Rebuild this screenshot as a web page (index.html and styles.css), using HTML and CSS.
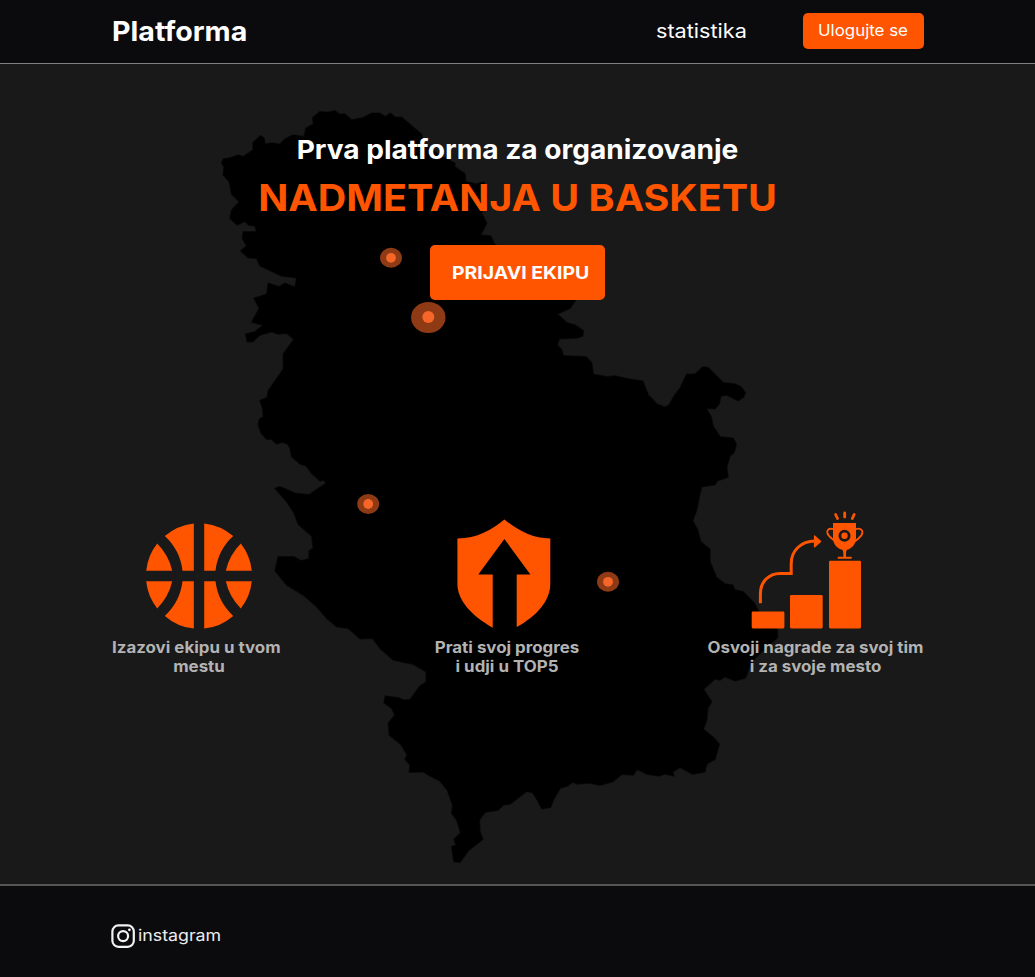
FILE: index.html
```
<!DOCTYPE html>
<html lang="sr">
<head>
<meta charset="utf-8">
<title>Platforma</title>
<link rel="stylesheet" href="styles.css">
</head>
<body>
<header class="header">
  <a class="brand">Platforma</a>
  <nav class="nav">
    <a class="nav-link">statistika</a>
    <button class="login"><span class="login-text">Ulogujte se</span></button>
  </nav>
</header>

<main class="hero">
  <svg class="map" viewBox="0 64 1035 820" aria-hidden="true">
    <path class="land" d="M221.7 163.3L223.3 159L230 158L238.3 155L243.3 156.7L253 150V142.7L260.7 135.7L264 138.3L265 144L272 143L280 144.3L285 139L293.3 135L304 136.7L306 128.3L313.3 124.3L312.7 117.7L320 111.7L328.3 112.3L335 110.7L339.3 114.3L345 114L351.7 120L363.3 117.7L371.7 113.3H380L385 116.7L390.7 113.3L395 117.3H401.7L413.3 127.3L421.7 134.3L423 141.7L432 150L445 158.3L455 163.3V167L465 174L465.7 181.7L476.7 184L484 182L486 195L481.7 213.3L486.7 223.3L480.7 235L490.7 236L494 243.3L520 270L575.7 300L570 308.3L557.3 314L566.7 322.7L575 325L583.3 330.7L582.7 336L576.7 338L559.3 338.7L557.3 345L561.7 350L563.3 355.7L586 356.7L591.7 362.7L593.3 374.3L606.7 376.7L615 376L630 379.3L642.7 381L648.3 395L653.3 400L656.7 404L665 407.3L669.3 405L673.3 397.3L680 388.3L686.7 374.3L695 374L703.3 366.7L708.3 367.7L723.3 382.7L735 384L741 387L745.5 393L743.3 397.3L738.3 400.7L726.7 395L721 396L719 404L715 408.7L706 408.3L711 416.7L713.3 426.7L720 436.7L733.3 438.3L736.3 444.3L734 452.7L730 456L726.7 466.7L728 477.3L717.3 480.7L715 484.7L701.7 486.7L699.3 496.7L696.7 510L692.7 520.7L697.7 530L700.7 541.7L710 549.3V561.7L716.7 577.7L725 584L732.7 585L735 590L743.3 591.7L754 602.7L760 614L774 624L777.3 630L777.7 637.3L771.7 642.7L756 657L750 665L746.7 675L745 678.3L735 680.7L725 676.7L720 680L715 679L703.3 689.3L711.7 701.7L707.7 708.3L706.7 720L703.3 729.3L713.3 737.3L719.3 744.3L715 759.3L706.7 764L705 771.7L692.7 774.3L680 767.3L672.7 771.7L674 776L665 774L659.3 776L647.3 774.3L636.7 769L633.3 775L621.7 774.3L612.7 781.7L600 785.3L588.3 783L577.3 784L572.7 782L567.3 786L560 788.3L553.3 800L550.7 807.3L541.7 808.7L538.3 801.7L532.7 792.7L526.7 791.3L510 804L503.3 805L498.3 810L485 812.3L479.3 820L480 831.7L482.7 839.3L468.3 850.7L460 862.3L454 861.7L451.7 846.7L456 845L454 839.3L460.7 832.7L456.7 820L451.7 813.3L452.7 805L447.3 790L440 781L428.3 775L423.3 771.7L409.3 772.3L410 765L405 759.3L407.3 755L400.7 744L389.3 735L388.3 723.3L395 715L391.7 708.3L384 702.7L385.3 696L398.3 697.7L403.3 700L410 699.7L420 686L426 682.3L426.3 671.7L413.3 664.3L393.3 660L380 648.3L372.7 638.3L360 638.7L348.3 628.3L336.7 626.7L326.7 618.3L316.7 606.7L303.3 595L286.7 585L275 570.7L278.3 556.7H294L301 560.7L309 558.7L309.3 550.7L313.3 548.3L311.7 536L298.3 524.3L294 512.7L286.7 501.7L275 488.3L280 486.7L295 493.3L309.3 494.7L326 483.3L324 480L320 481L311.7 473.3L306 465.7L300 464L291.7 456.7L290 448L287.7 444L282 442L276.7 444L271.7 439.3H266.7L261.3 433.3L258.3 425L259.3 419.3L263.3 416.7L262.7 408.3L260 400.7L267.3 397.3L268.3 390.7L283.3 369.3V354L294 339.3L286.7 333.3L278 334L271.7 331.7L260 335L252.7 341.7H247.3L245.7 334L255 331.7L263.3 325L251.7 322.3L259.3 308.3L254 298.3L266.7 294.3L268.3 283.3L279.3 286.7L285 283.3L295 287.3L296.7 277.7L281.7 276L260 265.7L256.7 258.3L248.3 257.7L240.7 251L246.7 245.7L242.3 238.3L243.3 231.7H256.7L255 226L248.3 225L245 221L237.3 225L230 218.3L231.7 210L239.3 201.7L231.7 194.3L229.3 181.7L223.3 175L224 166.7Z"/>
    <g class="halo">
      <ellipse cx="391" cy="257.8" rx="11" ry="10"/>
      <ellipse cx="428.3" cy="317.5" rx="17.2" ry="15.5"/>
      <ellipse cx="368.2" cy="504" rx="11" ry="10"/>
      <ellipse cx="608" cy="581.8" rx="11" ry="10"/>
    </g>
    <g class="pin">
      <circle cx="391" cy="257.8" r="4.9"/>
      <circle cx="428.3" cy="317" r="6"/>
      <circle cx="368.2" cy="504" r="4.9"/>
      <circle cx="608" cy="581.8" r="4.9"/>
    </g>
  </svg>

  <div class="intro">
    <h2 class="lead">Prva platforma za organizovanje</h2>
    <h1 class="title">NADMETANJA U BASKETU</h1>
    <button class="cta"><span class="cta-text">PRIJAVI EKIPU</span></button>
  </div>

  <div class="features">
    <section class="feature feature-ball">
      <svg class="icon" width="106" height="106" viewBox="145.5 523.3 106 106">
        <defs>
          <g id="quarter">
            <path d="M145.7 571A52.8 52.8 0 0 1 156.7 543.8A56 56 0 0 1 171.7 571Z"/>
            <path d="M164.3 536.4A52.8 52.8 0 0 1 193.3 523.7V571H182A56 56 0 0 0 164.3 536.4Z"/>
          </g>
        </defs>
        <use href="#quarter"/>
        <use href="#quarter" transform="translate(397 0) scale(-1 1)"/>
        <use href="#quarter" transform="translate(0 1152.6) scale(1 -1)"/>
        <use href="#quarter" transform="translate(397 1152.6) scale(-1 -1)"/>
      </svg>
      <p class="label"><span class="line line-a">Izazovi ekipu u tvom</span><span class="line">mestu</span></p>
    </section>
    <section class="feature feature-shield">
      <svg class="icon" width="94" height="110" viewBox="457 519.3 94 110">
        <path d="M504.4 519.7C517 530 532 538.7 550.3 538.7V584C550.3 601 537 616 516.7 627.4V574.7H530.4L504.4 539.3L478.3 574.7H492.7V628C472 616 457.4 601 457.4 584V538.7C477 538.7 492 530 504.4 519.7Z"/>
      </svg>
      <p class="label"><span class="line">Prati svoj progres</span><span class="line">i udji u TOP5</span></p>
    </section>
    <section class="feature feature-prize">
      <svg class="icon" width="114" height="118" viewBox="751 511.3 114 118">
        <rect x="751.7" y="611.7" width="32.7" height="17" rx="1.3"/>
        <rect x="790" y="595.2" width="32.7" height="33.5" rx="1.3"/>
        <rect x="829" y="561" width="32" height="67.7" rx="1.3"/>
        <path class="stroke thick" d="M760.4 603.6V594C760.4 582 769 573.7 780 573.7H791.2V564C791.2 551 801 541.4 815 541.4"/>
        <path class="tip" d="M814.6 536.3L820.6 541.7L814.6 547.1Z"/>
        <path fill-rule="evenodd" d="M833 523.2H856V538C856 544 852 549 847 550C846 551 846 553 846 557.3H843.4C843.4 553 843.4 551 842.3 550C837 549 833 544 833 538ZM844.5 530A6 6 0 1 0 844.5 542A6 6 0 1 0 844.5 530Z"/>
        <circle cx="844.5" cy="536" r="3.2"/>
        <path class="stroke thin" d="M833.5 529.5C829 528 827 530 827.3 533C828 537 831 538 835 541.5M855.5 529.5C860 528 862.7 530 862.4 533C862 537 859 538 855 541.5M838.5 558.1H851"/>
        <path class="stroke ray" d="M835.6 514.8L837.5 518.8M844.7 513.3V517.3M854.2 514.8L852.3 518.8"/>
      </svg>
      <p class="label"><span class="line">Osvoji nagrade za svoj tim</span><span class="line">i za svoje mesto</span></p>
    </section>
  </div>
</main>

<footer class="footer">
  <a class="social">
    <svg class="insta" width="24" height="24" viewBox="0 0 24 24">
      <rect x="1.4" y="1.4" width="21.4" height="21.4" rx="6"/>
      <circle cx="12.1" cy="12.1" r="5"/>
      <circle class="dot" cx="18.4" cy="5.8" r="1.4"/>
    </svg>
    <span class="social-name">instagram</span>
  </a>
</footer>
</body>
</html>
```
FILE: styles.css
```
* { box-sizing: border-box; }
body {
  margin: 0;
  height: 977px;
  display: flex;
  flex-direction: column;
  overflow: hidden;
  background: #0b0b0d;
  color: #fff;
  font-family: Inter, "Open Sans", sans-serif;
}
button {
  border: 0;
  color: #fff;
  font-family: inherit;
  background: #ff5500;
  text-align: left;
  white-space: nowrap;
}
.header {
  height: 64px;
  flex: none;
  display: flex;
  justify-content: space-between;
  padding: 0 111.5px;
  background: #0b0b0d;
  border-bottom: 1px solid #808080;
}
.brand {
  font-size: 27.5px;
  font-weight: 700;
  line-height: 30px;
  padding-top: 16px;
  transform: scaleX(1.04);
  transform-origin: left;
}
.nav { display: flex; gap: 56px; align-items: flex-start; }
.nav-link {
  font-size: 19.5px;
  line-height: 24px;
  margin-top: 19px;
  transform: scaleX(1.11);
  transform-origin: right;
}
.login {
  width: 121px;
  height: 35.5px;
  margin-top: 13px;
  padding: 0 0 0 15.5px;
  border-radius: 5px;
  font-size: 15.5px;
  line-height: 35px;
}
.login-text {
  display: inline-block;
  transform: scaleX(1.09);
  transform-origin: left;
}
.hero {
  position: relative;
  height: 820px;
  flex: none;
  background: #191919;
  padding-top: 70px;
}
.map { position: absolute; inset: 0; width: 1035px; height: 820px; }
.land { fill: #000; stroke: #000; stroke-opacity: .55; stroke-width: 1.6; stroke-linejoin: round; }
.halo { fill: #8e3a15; }
.pin { fill: #f66628; }
.intro {
  position: relative;
  display: flex;
  flex-direction: column;
  align-items: center;
}
.lead {
  margin: 0;
  font-size: 26px;
  line-height: 32px;
  transform: scaleX(1.08);
}
.title {
  margin: 9px 0 0;
  font-size: 37.5px;
  line-height: 46px;
  color: #ff5500;
  transform: scaleX(1.052);
}
.cta {
  width: 175px;
  height: 55px;
  margin-top: 24px;
  padding: 0 0 0 22px;
  border-radius: 5px;
  font-size: 17.5px;
  font-weight: 700;
  line-height: 55px;
}
.cta-text {
  display: inline-block;
  transform: scaleX(1.11);
  transform-origin: left;
}
.features {
  position: relative;
  display: grid;
  grid-template-columns: 323px 273.5px 215px;
  align-items: end;
  margin-top: 211px;
  padding: 0 111.5px;
}
.feature { display: flex; flex-direction: column; align-items: center; }
.feature-ball { width: 174px; }
.feature-shield { width: 144px; }
.feature-prize { width: 215px; }
.icon { display: block; fill: #ff5500; }
.feature-shield .icon { margin-right: 5px; }
.feature-prize .icon { margin-right: 16px; }
.stroke { fill: none; stroke: #ff5500; }
.thick { stroke-width: 3; }
.thin { stroke-width: 1.9; stroke-linecap: round; }
.ray { stroke-width: 2.8; stroke-linecap: round; }
.tip { stroke: #ff5500; stroke-width: 1.4; stroke-linejoin: round; }
.label {
  margin: 9px 0 0;
  width: 100%;
  color: #b3b3b3;
  font-size: 15.5px;
  font-weight: 700;
  line-height: 19px;
  text-align: center;
}
.line {
  display: block;
  white-space: nowrap;
  transform: scaleX(1.09);
}
.line-a { text-align: left; transform-origin: left; }
.footer {
  flex: 1;
  background: #0b0b0d;
  border-top: 2px solid #555;
  padding: 38px 111px 0;
}
.social { display: inline-flex; align-items: center; gap: 2.5px; }
.insta { fill: none; stroke: #f2f2f2; stroke-width: 2.2; }
.insta .dot { fill: #f2f2f2; stroke: none; }
.social-name {
  font-size: 16px;
  line-height: 24px;
  margin-top: -2px;
  color: #eee;
  transform: scaleX(1.11);
  transform-origin: left;
}
```
